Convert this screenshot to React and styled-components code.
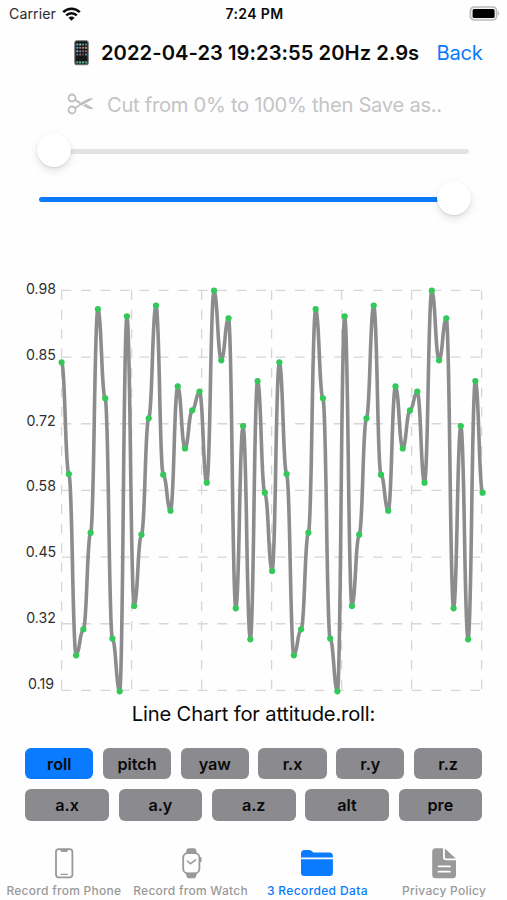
import React from "react";
import styled, { createGlobalStyle } from "styled-components";

const GlobalStyle = createGlobalStyle`
  * { box-sizing: border-box; }
  body { margin: 0; background: #fff; }
`;

const Screen = styled.div`
  width: 507px;
  height: 900px;
  overflow: hidden;
  display: flex;
  flex-direction: column;
  background: #fefefe;
  color: #0a0a0a;
  font-family: Inter, "Liberation Sans", sans-serif;
`;

const StatusBar = styled.header`
  height: 28px;
  display: grid;
  grid-template-columns: 1fr auto 1fr;
  align-items: center;
  padding: 0 7px 0 9px;
  font-size: 14.2px;
  line-height: 28px;
`;

const Carrier = styled.div`
  display: flex;
  align-items: center;
  gap: 6px;
  color: #2b2b2b;
  letter-spacing: 0.05px;
`;

const Clock = styled.div`
  font-weight: 600;
  font-size: 14px;
  letter-spacing: 0.4px;
`;

const BatterySlot = styled.div`
  display: flex;
  justify-content: flex-end;
`;

const TitleBar = styled.div`
  height: 50px;
  display: flex;
  align-items: center;
  padding: 0 0 1px 74px;
  line-height: 26px;
  white-space: nowrap;
`;

const Title = styled.h1`
  margin: 0 0 0 12px;
  width: 319px;
  font-size: 20.2px;
  font-weight: 600;
  letter-spacing: 0.04px;
`;

const BackButton = styled.button`
  margin: 0 0 0 16.5px;
  padding: 0;
  border: 0;
  background: none;
  color: #0a7aff;
  font: inherit;
  font-size: 20.2px;
  letter-spacing: -0.3px;
`;

const CutRow = styled.div`
  height: 53px;
  display: flex;
  align-items: center;
  gap: 13px;
  padding: 0 0 1px 67px;
  color: #c4c4c6;
  font-size: 20.2px;
  white-space: nowrap;
`;

const CutLabel = styled.span`
  letter-spacing: -0.29px;
`;

const Sliders = styled.div`
  height: 159px;
  padding: 3px 38px 0 39px;
`;

const SliderRow = styled.div`
  height: ${(p) => p.$height}px;
  display: flex;
  flex-direction: ${(p) => (p.$end ? "row-reverse" : "row")};
  align-items: center;
`;

const Knob = styled.div`
  flex: none;
  width: 34px;
  height: 34px;
  border-radius: 50%;
  background: #fff;
  margin: ${(p) => (p.$end ? "0 -2px 3px 0" : "0 0 3px -2px")};
  box-shadow: 0 4px 9px rgba(0, 0, 0, 0.11), 0 1px 2px rgba(0, 0, 0, 0.1);
  z-index: 1;
`;

const Track = styled.div`
  flex: 1;
  height: 5px;
  border-radius: 3px;
  background: ${(p) => (p.$filled ? "#0a7aff" : "#e3e3e4")};
  margin: ${(p) => (p.$filled ? "0 -3px 0 0" : "0 0 0 -3px")};
`;

const ChartArea = styled.div`
  height: 410px;
  display: flex;
`;

const AxisLabels = styled.div`
  width: 56px;
  height: 411.5px;
  margin-top: -10px;
  padding-left: 26px;
  display: flex;
  flex-direction: column;
  justify-content: space-between;
  align-items: center;
  font-size: 14.2px;
  line-height: 17px;
  color: #2e2e2e;
`;

const Plot = styled.svg`
  display: block;
  overflow: visible;
`;

const Caption = styled.div`
  height: 48px;
  text-align: center;
  font-size: 20.2px;
  line-height: 28px;
  letter-spacing: -0.18px;
`;

const ButtonRows = styled.div`
  height: 96px;
  display: flex;
  flex-direction: column;
  gap: 10px;
  padding: 0 24.8px 0 25.2px;
`;

const ButtonRow = styled.div`
  display: flex;
  gap: 9.6px;
`;

const SeriesButton = styled.button`
  flex: 1 1 0;
  height: 31.3px;
  padding: 0;
  border: 0;
  border-radius: 6px;
  background: ${(p) => (p.$active ? "#0a7aff" : "#8a8a8f")};
  color: #0a0a0a;
  font: inherit;
  font-size: 16.2px;
  font-weight: 600;
`;

const TabBar = styled.nav`
  height: 56px;
  display: grid;
  grid-template-columns: repeat(4, 126.75px);
  padding-left: 0.5px;
`;

const Tab = styled.a`
  display: flex;
  flex-direction: column;
  align-items: center;
  padding-top: 1px;
  color: ${(p) => (p.$active ? "#0a7aff" : "#999")};
`;

const TabIcon = styled.svg`
  display: block;
  width: 36px;
  height: 36px;
`;

const TabLabel = styled.span`
  font-size: 12px;
  font-weight: 500;
  line-height: 16px;
  margin-top: 2px;
  letter-spacing: ${(p) => (p.$active ? "0.36px" : "0.27px")};
  white-space: nowrap;
`;

// One full cycle of the roll trace, as vertical plot positions.
const cycle = [
  362.3, 474, 655.3, 629.3, 532.7, 309, 398.3, 638.6, 691.3, 316.3, 606, 534.7,
  418.3, 305.5, 474.7, 510.7, 386.3, 448.5, 410.3, 391.5, 482.7, 290.5, 360.3,
  318.3, 608.3, 426, 639.3, 381, 492.7, 571,
];
const STEP = 7.2586;
const points = Array.from({ length: 59 }, (_, i) => ({
  x: 5.6 + i * STEP,
  y: cycle[i % 30] - 290,
}));

const curve = points.reduce((d, p, i) => {
  if (i === 0) return `M${p.x} ${p.y}`;
  const q = points[i - 1];
  const mx = (p.x + q.x) / 2;
  const my = (p.y + q.y) / 2;
  return `${d} Q${(q.x + mx) / 2} ${q.y} ${mx} ${my} Q${(p.x + mx) / 2} ${p.y} ${p.x} ${p.y}`;
}, "");

const levels = ["0.98", "0.85", "0.72", "0.58", "0.45", "0.32", "0.19"];
const lines = [0, 1, 2, 3, 4, 5, 6];

function LineChart() {
  return (
    <ChartArea>
      <AxisLabels>
        {levels.map((v) => (
          <span key={v}>{v}</span>
        ))}
      </AxisLabels>
      <Plot width="440" height="408" viewBox="0 0 440 408" fill="none">
        <g stroke="#d6d6d7" strokeWidth="1.3" strokeDasharray="9.73 9.73">
          {lines.map((k) => (
            <path key={`h${k}`} d={`M5.6 ${0.4 + k * 66.67}H426`} />
          ))}
          {lines.map((k) => (
            <path key={`v${k}`} d={`M${5.6 + k * 70} 0.2V400.5`} />
          ))}
        </g>
        <path d={curve} stroke="#8c8c8f" strokeWidth="3.6" strokeLinejoin="round" />
        {points.map((p, i) => (
          <circle key={i} cx={p.x} cy={p.y} r="3.1" fill="#34c759" />
        ))}
      </Plot>
    </ChartArea>
  );
}

function WifiIcon() {
  return (
    <svg width="19" height="15" viewBox="0 0 19 15" fill="none" stroke="#0a0a0a" strokeWidth="2.5">
      <path d="M1.2 5.2C5.8 0.6 13.2 0.6 17.8 5.2" />
      <path d="M4.2 8.3C7.1 5.4 11.9 5.4 14.8 8.3" />
      <path d="M9.5 13.8L6.5 10.8C8.1 9.1 10.9 9.1 12.5 10.8Z" fill="#0a0a0a" stroke="none" />
    </svg>
  );
}

function BatteryIcon() {
  return (
    <svg width="31" height="16" viewBox="0 0 31 16">
      <rect x="1.4" y="1" width="26.2" height="13" rx="3.8" fill="#f4f4f4" stroke="#bcbcbc" strokeWidth="1.7" />
      <rect x="3.6" y="3.1" width="22" height="8.9" rx="1.6" fill="#000" />
      <path d="M29 5.3Q31.2 7.5 29 9.7Z" fill="#aaa" />
    </svg>
  );
}

const appColors = [
  "#67b7a1", "#b0b9bf", "#56a874", "#5280bb",
  "#4b9ac8", "#b96951", "#8890a0", "#c4a057",
  "#9ba8b2", "#5d86ad", "#b94d54", "#956355",
  "#4a77a6", "#a1673f", "#594c72", "#5f8995",
];

function PhoneEmoji() {
  return (
    <svg width="15" height="26" viewBox="0 0 15 26">
      <rect x="0.8" y="0.8" width="13.4" height="24" rx="2" fill="#15181b" stroke="#777" strokeWidth="1.1" />
      {appColors.map((c, i) => (
        <rect key={i} x={2.3 + (i % 4) * 2.9} y={3.4 + Math.floor(i / 4) * 3.4} width="2" height="2" rx="0.4" fill={c} />
      ))}
      {["#4ea873", "#58b98a", "#5aa9a0", "#4ea873"].map((c, i) => (
        <rect key={i} x={2.2 + i * 2.9} y="21.2" width="2.2" height="2.2" rx="0.4" fill={c} />
      ))}
    </svg>
  );
}

function ScissorsIcon() {
  return (
    <svg width="27" height="22" viewBox="0 0 27 22" fill="none" stroke="#bebec0" strokeWidth="1.8">
      <circle cx="5" cy="5" r="3.5" />
      <circle cx="5" cy="17" r="3.5" />
      <path d="M8 6.9L13.2 9.9M8 15.1L12.5 12.4" />
      <path d="M11.3 11.1L21.2 5.8Q24 4.6 26.5 5.8L14.8 12.2Q12.6 13.2 11.3 11.1Z" fill="#bebec0" stroke="none" />
      <path d="M15.6 12.4L19 10.9L26.5 15.2Q24.2 16.8 21.2 15.6Z" fill="#bebec0" stroke="none" />
    </svg>
  );
}

function RecordPhoneIcon() {
  return (
    <TabIcon viewBox="0 0 36 36" fill="none" stroke="currentColor">
      <rect x="10" y="4.1" width="16.4" height="28.2" rx="2.8" strokeWidth="1.8" />
      <path d="M14 4H22.4Q22 7 20.6 7H15.8Q14.4 7 14 4Z" fill="currentColor" stroke="none" />
      <path d="M15 29.4H21.4" strokeWidth="1.3" strokeLinecap="round" />
    </TabIcon>
  );
}

function RecordWatchIcon() {
  return (
    <TabIcon viewBox="0 0 36 36" fill="none" stroke="currentColor">
      <path d="M12.5 8.6L13.8 4.4Q14.3 3.2 15.5 3.2H21.2Q22.4 3.2 22.9 4.4L24.2 8.6Z" fill="currentColor" stroke="none" />
      <path d="M12.5 27.8L13.8 32Q14.3 33.2 15.5 33.2H21.2Q22.4 33.2 22.9 32L24.2 27.8Z" fill="currentColor" stroke="none" />
      <rect x="10.2" y="8.1" width="16.2" height="20.2" rx="4.5" strokeWidth="1.8" />
      <path d="M27.6 13V16.3" strokeWidth="1.8" strokeLinecap="round" />
      <path d="M14.4 16L17.4 18.8L22.5 14.8" strokeWidth="1.5" strokeLinecap="round" strokeLinejoin="round" />
    </TabIcon>
  );
}

function FolderIcon() {
  return (
    <TabIcon viewBox="0 0 36 36" fill="currentColor">
      <path d="M2 12.5V8.7Q2 5.1 5.6 5.1H10.2Q11.6 5.1 12.7 6L13.9 6.9Q14.7 7.4 15.8 7.4H30.4Q33.9 7.4 33.9 10.9V12.5Z" />
      <path d="M2 14.3H33.9V27.8Q33.9 31.1 30.6 31.1H5.4Q2 31.1 2 27.8Z" />
    </TabIcon>
  );
}

function DocumentIcon() {
  return (
    <TabIcon viewBox="0 0 36 36" fill="currentColor">
      <path
        fillRule="evenodd"
        d="M9.8 3.2H17V12.3Q17 15.2 19.9 15.2H30V29.7Q30 33.3 26.4 33.3H9.8Q6.2 33.3 6.2 29.7V6.8Q6.2 3.2 9.8 3.2ZM12.6 20.5Q11.6 20.5 11.6 21.4T12.6 22.3H23.8Q24.8 22.3 24.8 21.4T23.8 20.5ZM12.6 25.8Q11.6 25.8 11.6 26.7T12.6 27.6H23.8Q24.8 27.6 24.8 26.7T23.8 25.8Z"
      />
      <path d="M18.9 3.5L29.7 13.5H20.2Q18.9 13.5 18.9 12.2Z" />
    </TabIcon>
  );
}

const tabs = [
  { label: "Record from Phone", Icon: RecordPhoneIcon },
  { label: "Record from Watch", Icon: RecordWatchIcon },
  { label: "3 Recorded Data", Icon: FolderIcon, active: true },
  { label: "Privacy Policy", Icon: DocumentIcon },
];

const seriesRows = [
  ["roll", "pitch", "yaw", "r.x", "r.y", "r.z"],
  ["a.x", "a.y", "a.z", "alt", "pre"],
];

export default function App() {
  return (
    <Screen>
      <GlobalStyle />
      <StatusBar>
        <Carrier>
          Carrier <WifiIcon />
        </Carrier>
        <Clock>7:24 PM</Clock>
        <BatterySlot>
          <BatteryIcon />
        </BatterySlot>
      </StatusBar>
      <TitleBar>
        <PhoneEmoji />
        <Title>2022-04-23 19:23:55 20Hz 2.9s</Title>
        <BackButton>Back</BackButton>
      </TitleBar>
      <CutRow>
        <ScissorsIcon />
        <CutLabel>Cut from 0% to 100% then Save as..</CutLabel>
      </CutRow>
      <Sliders>
        <SliderRow $height={35}>
          <Knob />
          <Track />
        </SliderRow>
        <SliderRow $height={60} $end>
          <Knob $end />
          <Track $filled />
        </SliderRow>
      </Sliders>
      <LineChart />
      <Caption>Line Chart for attitude.roll:</Caption>
      <ButtonRows>
        {seriesRows.map((row) => (
          <ButtonRow key={row[0]}>
            {row.map((name) => (
              <SeriesButton key={name} $active={name === "roll"}>
                {name}
              </SeriesButton>
            ))}
          </ButtonRow>
        ))}
      </ButtonRows>
      <TabBar>
        {tabs.map(({ label, Icon, active }) => (
          <Tab key={label} $active={active}>
            <Icon />
            <TabLabel $active={active}>{label}</TabLabel>
          </Tab>
        ))}
      </TabBar>
    </Screen>
  );
}
